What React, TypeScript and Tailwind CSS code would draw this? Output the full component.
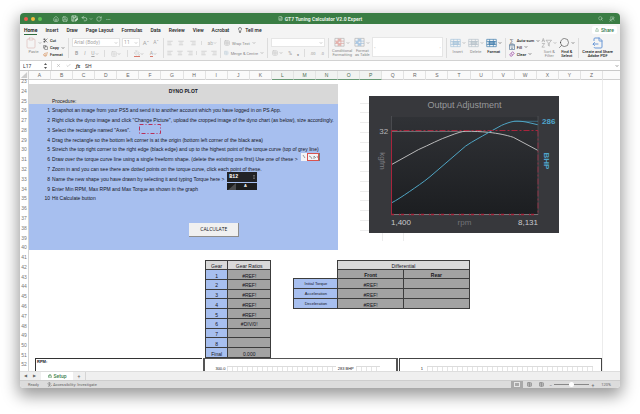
import { useState } from 'react';
import type { ReactNode } from 'react';
import clsx from 'clsx';
import {
  AlignCenter,
  AlignLeft,
  AlignRight,
  Check,
  ChevronDown,
  Clipboard,
  Copy,
  FileOutput,
  FileSpreadsheet,
  Grid2x2,
  House,
  Lightbulb,
  Lock,
  PaintBucket,
  Paintbrush,
  RotateCw,
  Save,
  Scissors,
  Search,
  Share,
  Table,
  Undo2,
  X,
} from 'lucide-react';

const TABS = ['Home', 'Insert', 'Draw', 'Page Layout', 'Formulas', 'Data', 'Review', 'View', 'Acrobat'];
const COLUMNS = 'ABCDEFGHIJKLMNOPQRSTUVWXYZ'.split('');
const SELECTED = 'LMNOP';
const ROWS = Array.from({ length: 30 }, (_, i) => i + 23);

const STEPS = [
  'Snapshot an image from your PS5 and send it to another account which you have logged in on PS App.',
  'Right click the dyno image and click "Change Picture", upload the cropped image of the dyno chart (as below), size accordingly.',
  'Select the rectangle named "Axes".',
  'Drag the rectangle so the bottom left corner is at the origin (bottom left corner of the black area)',
  'Stretch the top right corner to the right edge (black edge) and up to the highest point of the torque curve (top of grey line)',
  'Draw over the torque curve line using a single freeform shape. (delete the existing one first) Use one of these >',
  'Zoom in and you can see there are dotted points on the torque curve, click each point of these.',
  'Name the new shape you have drawn by selecting it and typing Torque here >',
  'Enter Min RPM, Max RPM and Max Torque as shown in the graph',
  'Hit Calculate button',
];

const GEARS = [
  ['1', '#REF!'],
  ['2', '#REF!'],
  ['3', '#REF!'],
  ['4', '#REF!'],
  ['5', '#REF!'],
  ['6', '#DIV/0!'],
  ['7', ''],
  ['8', ''],
  ['Final', '0.000'],
];

function Caret() {
  return <ChevronDown size={4} strokeWidth={3} className="shrink-0" />;
}

function Divider() {
  return <div className="my-px w-px shrink-0 self-stretch bg-[#dcdcdc]" />;
}

function TitleBar() {
  return (
    <header className="grid h-[11px] shrink-0 grid-cols-[1fr_auto_1fr] items-center rounded-t-[4px] bg-[#3a7d44] px-1 text-[#cfe3d2]">
      <div className="flex items-center">
        <div className="flex gap-[3px]">
          <button aria-label="Close" className="size-1 rounded-full bg-[#ee5b50]" />
          <button aria-label="Minimise" className="size-1 rounded-full bg-[#f0bb3c]" />
          <button aria-label="Full screen" className="size-1 rounded-full bg-[#5fc454]" />
        </div>
        <div className="ml-[11px] flex items-center gap-[3px]">
          <button aria-label="Home"><House size={6} /></button>
          <button aria-label="Save"><Save size={6} /></button>
          <button aria-label="Save as">
            <svg viewBox="0 0 24 24" className="size-[7px]" fill="none" stroke="currentColor" strokeWidth="2.5">
              <path d="M12 21H3V3h15l3 3v5M7 3v6h9V3M7 21v-8h6" />
              <path d="m14 21 1-4 6-6 3 3-6 6z" fill="currentColor" />
            </svg>
          </button>
          <button aria-label="Undo" className="flex items-center gap-px"><Undo2 size={7} /><Caret /></button>
          <button aria-label="Redo"><RotateCw size={6} /></button>
          <button aria-label="More" className="ml-px text-[5px] leading-[6px] font-bold">···</button>
        </div>
      </div>
      <h1 className="flex items-center gap-[2px] text-[5px] leading-[6px] font-bold text-[#e4f0e5]">
        <FileSpreadsheet size={5} strokeWidth={2} />
        GT7 Tuning Calculator V2.0 Expert
      </h1>
      <div className="flex justify-end gap-[6px] pr-px">
        <button aria-label="Search"><Search size={5} /></button>
        <button aria-label="Collaborate">
          <svg viewBox="0 0 24 24" className="size-[6px]" fill="none" stroke="currentColor" strokeWidth="2">
            <circle cx="16" cy="7" r="4" />
            <circle cx="7" cy="14" r="3" />
            <path d="M2 22c1-5 9-5 10 0M12 14c4-3 9-1 9 4M4 6l6-4" />
          </svg>
        </button>
      </div>
    </header>
  );
}

function TabStrip() {
  return (
    <nav className="flex h-3 shrink-0 items-center bg-[#f4f4f4] pr-[3px] pl-1 text-[5px] leading-[6px] font-medium text-[#222]">
      <div className="flex flex-1 gap-2">
        {TABS.map((tab) => (
          <button
            key={tab}
            className={clsx('h-[9px] border-b', tab === 'Home' ? 'border-[#2f6b3c] font-bold' : 'border-transparent')}
          >
            {tab}
          </button>
        ))}
        <button className="flex h-[9px] items-center gap-[2px] border-b border-transparent">
          <Lightbulb size={6} /> Tell me
        </button>
      </div>
      <button className="flex h-2 items-center gap-[2px] rounded-xs bg-white px-[3px] text-[#33794a]">
        <Share size={4} /> Share
      </button>
    </nav>
  );
}

function SmallAction({ icon, label, caret, faded }: { icon: ReactNode; label: string; caret?: boolean; faded?: boolean }) {
  return (
    <button className={clsx('flex items-center gap-[2px] whitespace-nowrap', faded ? 'text-[#8a8a8a]' : 'font-medium text-[#222]')}>
      {icon}
      {label}
      {caret && <Caret />}
    </button>
  );
}

function BigAction({ icon, lines, caret, faded }: { icon: ReactNode; lines: string[]; caret?: boolean; faded?: boolean }) {
  return (
    <button
      className={clsx(
        'flex flex-col items-center gap-px whitespace-nowrap',
        faded ? 'text-[#8a8a8a]' : 'font-medium text-[#222]',
      )}
    >
      <span className="flex items-center gap-px">
        {icon}
        {caret && <Caret />}
      </span>
      <span className="block leading-1">
        {lines.map((line) => (
          <span key={line} className="block">
            {line}
          </span>
        ))}
      </span>
    </button>
  );
}

function CellsIcon({ color }: { color: string }) {
  return (
    <svg viewBox="0 0 30 24" className="h-3 w-[11px]" fill="none" stroke={color} strokeWidth="2">
      <path d="M2 2h26v20H2zM2 8h26M2 16h26M10 2v20M20 2v20" />
      <path d="M8 8h16v8H8z" fill={color} fillOpacity="0.7" />
    </svg>
  );
}

function TableIcon({ color, fill }: { color: string; fill: string }) {
  return (
    <svg viewBox="0 0 24 24" className="size-[11px]" fill="none" stroke={color} strokeWidth="1.5">
      <path d="M2 3h20v17H2z" stroke="#b5b5b5" />
      <path d="M2 9h20M2 14h20M9 3v17M15 3v17" />
      <path d="M9 4h6v5H9zM4 9h5v5H4zM9 14h6v5H9z" fill={fill} stroke="none" />
    </svg>
  );
}

function Ribbon() {
  return (
    <div className="flex h-[25px] shrink-0 gap-[3px] border-b border-[#d2d2d2] bg-[#f4f4f4] pt-px pr-[7px] pb-px pl-[5px] text-[4px] leading-[5px]">
      <div className="flex gap-px">
        <BigAction faded caret icon={<Clipboard size={12} strokeWidth={1} color="#d7a9a4" />} lines={['Paste']} />
        <div className="flex flex-col justify-between py-px pb-[2px]">
          <SmallAction icon={<Scissors size={5} />} label="Cut" />
          <SmallAction caret icon={<Copy size={5} />} label="Copy" />
          <SmallAction icon={<Paintbrush size={5} color="#d07a35" />} label="Format" />
        </div>
      </div>
      <Divider />

      <div className="flex w-[88px] flex-col justify-between py-px text-[#a5a5a5]">
        <div className="flex items-center gap-[2px]">
          <label className="flex h-[9px] flex-1 items-center border border-[#e2e2e2] bg-white pr-px text-[5px]">
            <select aria-label="Font" className="w-full appearance-none pl-px">
              <option>Arial (Body)</option>
            </select>
            <Caret />
          </label>
          <label className="flex h-[9px] w-[18px] items-center border border-[#e2e2e2] bg-white pr-px text-[5px]">
            <select aria-label="Font size" className="w-full appearance-none pl-px">
              <option>11</option>
            </select>
            <Caret />
          </label>
          <button className="w-2 text-[6px]">Aˆ</button>
          <button className="w-2 text-[5px]">Aˇ</button>
        </div>
        <div className="flex h-[9px] items-center justify-between px-[3px] text-[5px]">
          <button className="font-bold">B</button>
          <button className="italic">I</button>
          <button className="flex items-center underline">U<Caret /></button>
          <Divider />
          <button aria-label="Borders" className="flex items-center"><Grid2x2 size={6} strokeWidth={1} /><Caret /></button>
          <Divider />
          <button aria-label="Fill colour" className="flex items-center"><span className="border-b border-[#d97a6c]"><PaintBucket size={6} strokeWidth={1} /></span><Caret /></button>
          <button className="flex items-center"><span className="border-b border-[#d97a6c]">A</span><Caret /></button>
        </div>
      </div>
      <Divider />

      <div className="flex w-[50px] flex-col justify-between py-[3px] text-[#b4b4b4]">
        <div className="flex items-center justify-between">
          <AlignLeft size={6} strokeWidth={2} />
          <AlignCenter size={6} strokeWidth={2} />
          <AlignRight size={6} strokeWidth={2} />
          <Divider />
          <button className="flex items-center text-[5px]">ab<Caret /></button>
        </div>
        <div className="flex items-center justify-between">
          <AlignLeft size={6} strokeWidth={2} />
          <AlignCenter size={6} strokeWidth={2} />
          <AlignRight size={6} strokeWidth={2} />
          <Divider />
          <AlignLeft size={6} strokeWidth={2} />
          <AlignRight size={6} strokeWidth={2} />
        </div>
      </div>
      <Divider />

      <div className="flex w-[40px] flex-col justify-between py-[3px]">
        <SmallAction faded caret icon={<Table size={6} strokeWidth={1} />} label="Wrap Text" />
        <SmallAction faded caret icon={<Table size={6} strokeWidth={1} color="#8aa9c4" />} label="Merge & Centre" />
      </div>
      <Divider />

      <div className="flex w-[54px] flex-col justify-between py-px text-[#9a9a9a]">
        <label className="flex h-[9px] items-center border border-[#e6e6e6] bg-white pr-px">
          <select aria-label="Number format" className="w-full appearance-none" />
          <Caret />
        </label>
        <div className="flex h-[10px] items-center justify-between px-px text-[5px]">
          <button aria-label="Currency" className="flex items-center gap-px"><Table size={6} strokeWidth={1} /><Caret /></button>
          <button>%</button>
          <button className="font-bold">❟</button>
          <Divider />
          <button className="text-[4px]">.00</button>
          <button className="text-[4px]">.0</button>
        </div>
      </div>
      <Divider />

      <div className="flex flex-1 gap-[2px]">
        <BigAction faded caret icon={<TableIcon color="#d9a29e" fill="#e5b0ab" />} lines={['Conditional', 'Formatting']} />
        <BigAction faded caret icon={<TableIcon color="#9dbbd8" fill="#a9c8e4" />} lines={['Format', 'as Table']} />
        <div className="flex h-5 flex-1 items-center justify-between border border-[#e6e6e6] bg-white px-px text-[#aaa]">
          <span>‹</span>
          <span>›</span>
        </div>
      </div>
      <Divider />

      <div className="flex gap-[2px]">
        <BigAction faded caret icon={<CellsIcon color="#a9c6dc" />} lines={['Insert']} />
        <BigAction faded caret icon={<CellsIcon color="#b9c4cc" />} lines={['Delete']} />
        <BigAction caret icon={<CellsIcon color="#4a83b0" />} lines={['Format']} />
      </div>
      <Divider />

      <div className="flex gap-px">
        <div className="flex flex-col justify-between py-px pb-[2px]">
          <SmallAction caret icon={<span className="w-[6px] text-[6px] text-[#888]">∑</span>} label="Auto-sum" />
          <SmallAction
            caret
            icon={
              <svg viewBox="0 0 24 24" className="size-[6px]" fill="none" stroke="#4d6f8f" strokeWidth="2.5">
                <path d="M2 2h20v20H2zM2 7h20M12 10v8M8 15l4 4 4-4" />
              </svg>
            }
            label="Fill"
          />
          <SmallAction
            caret
            icon={
              <svg viewBox="0 0 24 24" className="size-[6px]" fill="none" stroke="#a04fa8" strokeWidth="3">
                <path d="M3 15 14 3l7 6-11 12H7zM8 10l7 6" />
              </svg>
            }
            label="Clear"
          />
        </div>
        <BigAction
          faded
          caret
          icon={
            <svg viewBox="0 0 24 24" className="h-3 w-[11px]" fill="none" stroke="#a8a8a8" strokeWidth="1.5">
              <path d="M2 10 5 2l3 8M3 7h4M2 13h6l-6 8h6M11 6h12l-5 6v7l-2-2v-5z" />
            </svg>
          }
          lines={['Sort &', 'Filter']}
        />
        <BigAction caret icon={<Search size={12} strokeWidth={1} className="-scale-x-100" />} lines={['Find &', 'Select']} />
      </div>
      <Divider />
      <BigAction icon={<FileOutput size={12} strokeWidth={2} color="#6a98d6" />} lines={['Create and Share', 'Adobe PDF']} />
    </div>
  );
}

function FormulaBar() {
  return (
    <div className="flex h-[9px] shrink-0 items-center bg-white pr-px text-[5px] leading-[6px] text-[#333]">
      <input aria-label="Name box" defaultValue="L17" className="w-[22px] pl-[3px]" />
      <svg viewBox="0 0 6 12" className="ml-[2px] h-[6px] w-[3px]" fill="#555">
        <path d="M3 0 6 4H0zM3 12 6 8H0z" />
      </svg>
      <div className="mx-1 h-full w-px bg-[#dedede]" />
      <button aria-label="Cancel" className="text-[#999]"><X size={5} /></button>
      <button aria-label="Accept" className="mx-[5px] text-[#999]"><Check size={5} /></button>
      <span className="w-2 font-serif font-bold italic">fx</span>
      <input aria-label="Formula" defaultValue="SH" className="ml-px min-w-0 flex-1" />
      <Caret />
    </div>
  );
}

function DynoChart() {
  return (
    <svg
      viewBox="0 0 190 137"
      className="col-start-16 col-end-25 row-start-3 row-end-18 mt-[2px] ml-[9px] h-[137px] w-[190px]"
      fontFamily="Liberation Sans, Arial, sans-serif"
      fontSize="8"
    >
      <defs>
        <linearGradient id="plot" x1="0" y1="0" x2="0" y2="1">
          <stop offset="0" stopColor="#303236" />
          <stop offset="1" stopColor="#1c1e21" />
        </linearGradient>
      </defs>
      <rect width="190" height="137" fill="#37383c" />
      <rect x="22" y="21" width="147" height="98" fill="url(#plot)" />
      <text x="95.5" y="11.5" fontSize="9" textAnchor="middle" fill="#97989b">Output Adjustment</text>
      <path d="M22.5 20v99M169 20v99" stroke="#55565a" strokeWidth="0.7" />
      <path d="M22 35.5h75" stroke="#88898c" strokeWidth="0.7" />
      <path d="M145 25.3h24" stroke="#3d7f9c" strokeWidth="0.7" />
      <path
        d="M22.3 68.7 49.3 53.7C60 49 71 43 81 39.7 88 37 93 35.3 96.7 35.3 105 35.2 112 35.6 119.3 36.3 130 37.5 137 39 144.3 41.3L168.7 54.3"
        fill="none"
        stroke="#b9b9ba"
        strokeWidth="1"
      />
      <path
        d="M22.3 107C28 104 34 100 40.3 95.7 47 91 54 86.5 61 80.7L96.7 50C104 45 112 41 119.3 36.7L132.7 29.3C137 27.5 141 26 145 25.3 149 25 153 25.3 157 26L168.7 28.7"
        fill="none"
        stroke="#4fa5c4"
        strokeWidth="1"
      />
      <path d="M22.5 119V34.5" stroke="#a8243c" strokeWidth="1" />
      <path d="M22.5 34.5H169" stroke="#a8243c" strokeWidth="1" strokeDasharray="6 2 2 2" />
      <path d="M169 34.5V119" stroke="#8e3044" strokeWidth="1" strokeDasharray="6 2 2 2" />
      <path d="M22 118.5H169" stroke="#7c7477" strokeWidth="1" />
      <path d="M22 118.5H169" stroke="#a8243c" strokeWidth="1.3" strokeDasharray="3 5 1 1" />
      <text x="10.3" y="38" fill="#b4b5b7">32</text>
      <text x="173" y="28" fontWeight="700" fill="#4fa5cc">286</text>
      <text transform="translate(11 65) rotate(90)" textAnchor="middle" fill="#7d7e82">kgfm</text>
      <text transform="translate(175 65) rotate(90)" textAnchor="middle" fontWeight="700" fill="#4fa5cc">BHP</text>
      <text x="22" y="129" fill="#c9cacc">1,400</text>
      <text x="95.5" y="129" textAnchor="middle" fill="#727377">rpm</text>
      <text x="169" y="129" textAnchor="end" fill="#c9cacc">8,131</text>
    </svg>
  );
}

function DynoPanel() {
  return (
    <section className="col-start-1 col-end-15 row-start-2 row-end-19 grid grid-cols-subgrid grid-rows-subgrid bg-[#a7bfef]">
      <div className="col-span-full row-start-1 row-end-3 bg-[#d8d8d8]" />
      <h2 className="col-span-full row-start-1 self-end text-center font-bold">DYNO PLOT</h2>
      <p className="col-start-2 col-end-8 row-start-2 self-end pl-px">Procedure:</p>
      <ol className="col-span-full row-start-3 row-end-13 grid grid-cols-subgrid grid-rows-subgrid">
        {STEPS.map((step, i) => (
          <li key={step} className="col-span-full grid grid-cols-subgrid items-end">
            <span className="pr-px text-right">{i + 1}</span>
            <span className="col-start-2 col-end-15 pl-px whitespace-nowrap">{step}</span>
          </li>
        ))}
      </ol>
      <svg viewBox="0 0 22 10" className="col-start-6 row-start-5 row-end-7 mt-px h-[10px] w-[22px]">
        <rect x="0.5" y="0.5" width="21" height="9" fill="none" stroke="#b8305a" strokeDasharray="4 2 1 2" />
      </svg>
      <svg viewBox="0 0 19 8" className="col-start-13 col-end-15 row-start-8 row-end-10 mt-px ml-2 h-2 w-[19px]">
        <rect width="19" height="8" fill="#f3f3f6" />
        <path d="M2 2l2 3M8 3l2 1 1 2M13 6V3l2 2M17 5l-1-2" fill="none" stroke="#777" strokeWidth="0.7" />
        <rect x="6.5" y="0.5" width="11" height="7" fill="none" stroke="#d9534f" />
        <path d="M18.5 0v8" stroke="#777" />
      </svg>
      <div className="col-start-10 col-end-12 row-start-10 row-end-12 flex h-[10px] w-[30px] items-center justify-between bg-[#222326] px-[2px] font-mono font-bold text-white">
        B12
        <svg viewBox="0 0 6 12" className="h-[6px] w-[2px]" fill="#bbb">
          <path d="M3 0 6 4H0zM3 12 6 8H0z" />
        </svg>
      </div>
      <div className="col-start-10 col-end-12 row-start-11 mt-px flex h-[7px] w-[30px] items-center bg-[#1d1e1f] text-[4px] font-bold text-white">
        <svg viewBox="0 0 10 7" className="h-[7px] w-[10px]">
          <path d="M9 0v7H1z" fill="#4a4b4d" />
        </svg>
        <span className="flex-1 pr-1 text-center">A</span>
      </div>
      <button className="col-start-8 col-end-11 row-start-15 row-end-17 mt-[2px] ml-[6px] h-[14px] w-[50px] border-r border-b border-[#8d8d8d] bg-[#f0f0f0] font-['Open_Sans',sans-serif] font-medium">
        CALCULATE
      </button>
    </section>
  );
}

function GearTable() {
  return (
    <table className="col-start-9 col-end-12 row-start-20 row-end-30 h-full w-full table-fixed border-collapse border border-[#3c3c3c] text-center">
      <thead>
        <tr className="bg-[#d9d9d9]">
          <th className="w-1/3 border border-[#3c3c3c] p-0 pt-[2px] font-normal">Gear</th>
          <th className="border border-[#3c3c3c] p-0 pt-[2px] font-normal">Gear Ratios</th>
        </tr>
      </thead>
      <tbody>
        {GEARS.map(([gear, ratio]) => (
          <tr key={gear}>
            <td className="border border-[#3c3c3c] bg-[#a7bfef] p-0 pt-[2px]">{gear}</td>
            <td className="border border-[#3c3c3c] bg-[#a3a3a3] p-0 pt-[2px]">{ratio}</td>
          </tr>
        ))}
      </tbody>
    </table>
  );
}

function DifferentialTable() {
  return (
    <table className="col-start-13 col-end-21 row-start-20 row-end-25 h-full w-full table-fixed border-collapse text-center">
      <colgroup>
        <col className="w-1/4" />
        <col />
        <col />
      </colgroup>
      <thead>
        <tr>
          <td className="p-0" />
          <th colSpan={2} className="border border-[#3c3c3c] bg-[#d9d9d9] p-0 pt-[2px] font-normal">Differential</th>
        </tr>
        <tr>
          <td className="p-0" />
          <th className="border border-[#3c3c3c] bg-[#a3a3a3] p-0 pt-[2px]">Front</th>
          <th className="border border-[#3c3c3c] bg-[#a3a3a3] p-0 pt-[2px]">Rear</th>
        </tr>
      </thead>
      <tbody>
        {['Initial Torque', 'Acceleration', 'Deceleration'].map((name) => (
          <tr key={name}>
            <th className="border border-[#3c3c3c] bg-[#a7bfef] p-0 text-[4px] font-normal">{name}</th>
            <td className="border border-[#3c3c3c] bg-[#a3a3a3] p-0 pt-[2px]">#REF!</td>
            <td className="border border-[#3c3c3c] bg-[#a3a3a3] p-0" />
          </tr>
        ))}
      </tbody>
    </table>
  );
}

function Ticks() {
  return <div className="h-[5px] flex-1 border-t border-[#dcdcdc] bg-[repeating-linear-gradient(90deg,#e4e4e4_0_1px,transparent_1px_5px)]" />;
}

function ChartRow() {
  return (
    <div className="col-span-full row-start-30 ml-[6px] grid grid-cols-[168fr_195fr_204fr] gap-px text-[4px] leading-[5px]">
      <div className="border-t border-l border-[#333] pl-px font-bold">RPM:</div>
      <div className="flex items-end gap-[2px] border-x-2 border-t border-[#555] pr-4 pl-[10px]">
        300.0
        <Ticks />
        283 BHP
        <div className="flex w-6">
          <Ticks />
        </div>
      </div>
      <div className="flex items-end gap-1 border-t border-r border-l border-[#444] pr-2 pl-[21px]">
        1
        <Ticks />
      </div>
    </div>
  );
}

function Sheet() {
  return (
    <main className="flex flex-1 flex-col border-t border-[#c9c9c9] bg-white font-['Liberation_Sans',Arial,sans-serif] text-[5px] leading-[6px]">
      <div className="flex h-[9px] shrink-0 border-b border-[#cfcfcf] bg-[#fafafa] text-[#666]">
        <svg viewBox="0 0 9 9" className="h-2 w-[9px] border-r border-[#d5d5d5]">
          <path d="M8 1v7H1z" fill="#ccc" />
        </svg>
        <div className="mr-[17px] grid flex-1 grid-cols-26 text-center">
          {COLUMNS.map((col) => (
            <div
              key={col}
              className={clsx(
                'border-r pt-px',
                SELECTED.includes(col) ? 'h-[9px] border-b border-r-[#e2e4e2] border-b-[#6a9a76] bg-[#f1f3f1] text-[#4a6b52]' : 'border-[#e2e2e2]',
              )}
            >
              {col}
            </div>
          ))}
        </div>
      </div>
      <div className="flex flex-1">
        <div className="grid w-[9px] shrink-0 grid-rows-[4px_repeat(28,minmax(9px,1fr))_13px] border-r border-[#d5d5d5] text-center text-[#777]">
          {ROWS.map((row) => (
            <div key={row} className={clsx('flex justify-center', row === 52 ? 'items-center' : 'items-end')}>
              {row}
            </div>
          ))}
        </div>
        <div className="mr-[17px] grid flex-1 grid-cols-26 grid-rows-[4px_repeat(28,minmax(9px,1fr))_13px] border-r border-[#ececec] text-[#15151c]">
          {ROWS.slice(2, 16).map((row, i) => (
            <div key={row} style={{ gridRow: i + 3 }} className="col-start-16 border-b border-[#ececec]" />
          ))}
          <div className="col-start-17 row-start-17 border-x border-[#ececec]" />
          <DynoPanel />
          <DynoChart />
          <GearTable />
          <DifferentialTable />
          <ChartRow />
        </div>
      </div>
    </main>
  );
}

function StatusBar() {
  const [zoom, setZoom] = useState(120);

  return (
    <footer className="shrink-0 text-[4px] leading-[6px] text-[#666]">
      <div className="flex h-[9px] items-center border-t border-[#ddd] bg-[#efefef]">
        <button aria-label="Previous sheet" className="w-[10px]">◀</button>
        <button aria-label="Next sheet" className="w-[8px]">▶</button>
        <button className="ml-[3px] flex h-full w-8 items-center justify-center gap-[2px] bg-white text-[5px] font-medium text-[#3b8049]">
          <Lock size={4} strokeWidth={3} /> Setup
        </button>
        <button aria-label="Add sheet" className="h-full w-[13px] border-r border-[#d5d5d5] text-[5px]">+</button>
      </div>
      <div className="flex h-2 items-center rounded-b-[4px] border-t border-[#cdcdcd] bg-[#dcdcdc] pr-[9px] pl-2">
        <span>Ready</span>
        <button className="ml-2 flex items-center gap-px">
          <svg viewBox="0 0 24 24" className="size-[5px]" fill="none" stroke="currentColor" strokeWidth="2.5">
            <circle cx="11" cy="4" r="2.5" />
            <path d="M2 8c6 3 12 3 18 0M11 10v5l-5 8M11 15l5 8M18 14l5 5" />
          </svg>
          Accessibility: Investigate
        </button>
        <div className="ml-auto flex items-center">
          <button aria-label="Normal view" className="flex h-[7px] w-3 items-center justify-center bg-[#a9a9a9]">
            <span className="h-[5px] w-[6px] border border-[#e5e5e5]" />
          </button>
          <button aria-label="Page layout view" className="ml-1"><Table size={5} /></button>
          <button aria-label="Page break view" className="ml-[7px]"><Table size={5} /></button>
          <span className="ml-[6px] text-[5px]">−</span>
          <input
            type="range"
            aria-label="Zoom"
            min={10}
            max={230}
            value={zoom}
            onChange={(e) => setZoom(Number(e.target.value))}
            className="mx-[2px] h-px w-[35px] appearance-none bg-[#888] [&::-webkit-slider-thumb]:size-[5px] [&::-webkit-slider-thumb]:appearance-none [&::-webkit-slider-thumb]:rounded-full [&::-webkit-slider-thumb]:bg-white"
          />
          <span className="text-[5px]">+</span>
          <span className="ml-[7px]">{zoom}%</span>
        </div>
      </div>
    </footer>
  );
}

export default function App() {
  return (
    <div className="flex min-h-screen bg-white px-5 pt-[13px] pb-[26px] font-['Roboto',sans-serif]">
      <div className="flex min-w-0 flex-1 flex-col rounded-[4px] shadow-[0_6px_16px_2px_rgba(0,0,0,0.4)]">
        <TitleBar />
        <TabStrip />
        <Ribbon />
        <FormulaBar />
        <Sheet />
        <StatusBar />
      </div>
    </div>
  );
}
